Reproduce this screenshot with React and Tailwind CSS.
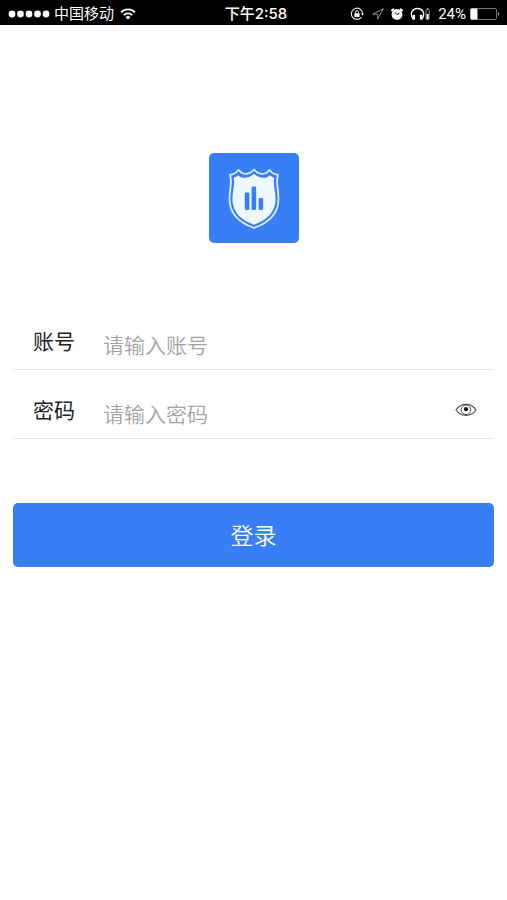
import React, { useState } from 'react';

const SignalDots = () => (
  <svg viewBox="0 0 42 10" className="h-[10px] w-[42px]" fill="#fff" aria-hidden="true">
    {[4, 12.5, 21, 29.5, 38].map((cx) => (
      <circle key={cx} cx={cx} cy="5" r="3.4" />
    ))}
  </svg>
);

const WifiIcon = () => (
  <svg viewBox="0 0 16 12" className="h-3 w-4" fill="none" stroke="#fff" strokeWidth="1.8" aria-hidden="true">
    <path d="M1 4.3a10 10 0 0 1 14 0" />
    <path d="M3.7 7.1a6.2 6.2 0 0 1 8.6 0" />
    <path d="M8 11.6 5.6 9.2a3.4 3.4 0 0 1 4.8 0Z" fill="#fff" stroke="none" />
  </svg>
);

const RotationLockIcon = () => (
  <svg viewBox="0 0 14 14" className="h-[14px] w-[14px]" fill="none" stroke="#e6e6e6" aria-hidden="true">
    <path d="M11.6 10A5.6 5.6 0 1 1 12.6 7" strokeWidth="1.1" />
    <path d="M10.8 6.6h3.2l-1.5 2.2Z" fill="#e6e6e6" stroke="none" />
    <rect x="4.4" y="6.2" width="5.2" height="3.8" rx="0.4" fill="#fff" stroke="none" />
    <path d="M5.5 6.4V5.2a1.5 1.5 0 0 1 3 0v1.2" strokeWidth="1" />
  </svg>
);

const LocationIcon = () => (
  <svg viewBox="0 0 12 12" className="h-3 w-3" fill="none" stroke="#8e8e8e" strokeWidth="1" strokeLinejoin="round" aria-hidden="true">
    <path d="M11.3.7.7 6.2h5v5Z" />
  </svg>
);

const AlarmIcon = () => (
  <svg viewBox="0 0 14 14" className="h-[14px] w-[14px]" aria-hidden="true">
    <circle cx="7" cy="7.4" r="5.4" fill="#fff" />
    <path d="M1.9 3.5 3.4 2.3M12.1 3.5l-1.5-1.2" stroke="#fff" strokeWidth="2" strokeLinecap="round" />
    <path d="M4.8 5.2 7 7.6l2.4-1.4" fill="none" stroke="#000" strokeWidth="1" />
  </svg>
);

const HeadphonesIcon = () => (
  <svg viewBox="0 0 22 14" className="h-[14px] w-[22px]" fill="none" aria-hidden="true">
    <path d="M3.2 12.3C-.8 6.8 2.2 1.5 7.5 1.5s8.3 5.3 4.3 10.8" stroke="#fff" strokeWidth="1.3" />
    <rect x="2.7" y="7.8" width="2.4" height="5" rx="0.8" fill="#fff" />
    <rect x="9.9" y="7.8" width="2.4" height="5" rx="0.8" fill="#fff" />
    <rect x="16" y="2.4" width="3.2" height="10.2" rx="0.8" stroke="#a0a0a0" strokeWidth="0.9" />
    <rect x="16.6" y="7" width="2" height="5" fill="#fff" />
    <path d="M16.8 1.5h1.6" stroke="#a0a0a0" />
  </svg>
);

const BatteryIcon = () => (
  <svg viewBox="0 0 30 12" className="h-3 w-[30px]" fill="none" aria-hidden="true">
    <rect x="0.5" y="0.5" width="26" height="11" rx="1.5" stroke="#777" />
    <rect x="0.5" y="0.5" width="7" height="11" rx="1" fill="#fff" />
    <path d="M28 4.2c1.6.6 1.6 3 0 3.6Z" fill="#c4c4c4" />
  </svg>
);

const StatusBar = () => (
  <header className="grid grid-cols-[1fr_auto_1fr] items-center bg-black pb-px pl-2 pr-[7px] pt-1 text-[15px] leading-5 text-white">
    <div className="flex items-center">
      <SignalDots />
      <span className="ml-1 mr-1.5">中国移动</span>
      <WifiIcon />
    </div>
    <time className="pl-1 font-['Inter','Noto_Sans_CJK_SC',sans-serif] font-medium">下午2:58</time>
    <div className="flex items-center justify-end">
      <RotationLockIcon />
      <span className="ml-2"><LocationIcon /></span>
      <span className="ml-1.5"><AlarmIcon /></span>
      <span className="ml-1.5"><HeadphonesIcon /></span>
      <span className="ml-1.5 mr-1">24%</span>
      <BatteryIcon />
    </div>
  </header>
);

const Logo = () => (
  <svg viewBox="0 0 90 90" className="h-[90px] w-[90px] rounded-[5px] bg-[#387ef7]" role="img" aria-label="Logo">
    <path
      d="M45 16.5C42 20 37.5 21.5 34 20.5C32 20 31 18.5 29.5 17C27.5 19.5 24.5 21.5 21 22C23.5 29 20.5 36 20.5 46C20.5 62 31 70 45 75C59 70 69.5 62 69.5 46C69.5 36 66.5 29 69 22C65.5 21.5 62.5 19.5 60.5 17C59 18.5 58 20 56 20.5C52.5 21.5 48 20 45 16.5Z"
      fill="#387ef7"
      stroke="#dcecff"
      strokeWidth="1.8"
      strokeLinejoin="round"
    />
    <path
      d="M45 20.8C41.5 24.3 36.5 25.6 32.5 24.4C31 24 30.2 23.1 29.3 22.2C28 23.4 26.5 24.2 24.6 24.8C26.3 32 23.4 38 23.4 46C23.4 59.6 32.3 67 45 71.8C57.7 67 66.6 59.6 66.6 46C66.6 38 63.7 32 65.4 24.8C63.5 24.2 62 23.4 60.7 22.2C59.8 23.1 59 24 57.5 24.4C53.5 25.6 48.5 24.3 45 20.8Z"
      fill="#f0f8ff"
    />
    <g fill="#387ef7">
      <rect x="35.8" y="39.4" width="4.6" height="17.6" rx="1.4" />
      <rect x="42.6" y="33.6" width="4.6" height="23.4" rx="1.4" />
      <rect x="49.6" y="45" width="4.6" height="12" rx="1.4" />
    </g>
  </svg>
);

const EyeIcon = () => (
  <svg viewBox="0 0 22 14" className="h-[14px] w-[22px]" fill="none" stroke="#555" aria-hidden="true">
    <path d="M1 7C6-.4 16-.4 21 7C16 14.2 6 14.2 1 7Z" strokeWidth="1.2" />
    <circle cx="11" cy="6.8" r="4.8" strokeWidth="1" />
    <circle cx="11" cy="6.2" r="2.1" fill="#111" stroke="none" />
  </svg>
);

const Field = ({ id, label, children, ...inputProps }) => (
  <div className="flex h-[69px] items-end border-b border-[#e6e6e6] pb-[9px] pl-5 pr-[17px]">
    <label htmlFor={id} className="w-[70px] shrink-0 pb-1 text-[21px] leading-7 text-[#222]">
      {label}
    </label>
    <input
      id={id}
      className="h-7 min-w-0 flex-1 bg-transparent text-[21px] leading-7 text-[#222] outline-none placeholder:font-[350] placeholder:text-[#a3a3a3]"
      {...inputProps}
    />
    {children}
  </div>
);

const App = () => {
  const [account, setAccount] = useState('');
  const [password, setPassword] = useState('');
  const [showPassword, setShowPassword] = useState(false);

  return (
    <div className="min-h-screen bg-white font-['Roboto','Noto_Sans_CJK_SC',sans-serif]">
      <StatusBar />
      <main className="px-[13px] pt-32">
        <div className="flex justify-center">
          <Logo />
        </div>
        <form className="mt-[58px]" onSubmit={(e) => e.preventDefault()}>
          <Field
            id="account"
            label="账号"
            type="text"
            placeholder="请输入账号"
            value={account}
            onChange={(e) => setAccount(e.target.value)}
          />
          <Field
            id="password"
            label="密码"
            type={showPassword ? 'text' : 'password'}
            placeholder="请输入密码"
            value={password}
            onChange={(e) => setPassword(e.target.value)}
          >
            <button
              type="button"
              aria-label="显示密码"
              className="flex h-[38px] items-center"
              onClick={() => setShowPassword(!showPassword)}
            >
              <EyeIcon />
            </button>
          </Field>
          <button
            type="submit"
            className="mt-16 h-16 w-full rounded-[5px] bg-[#387ef7] pt-1 text-[23px] font-[350] leading-8 text-white"
          >
            登录
          </button>
        </form>
      </main>
    </div>
  );
};

export default App;
